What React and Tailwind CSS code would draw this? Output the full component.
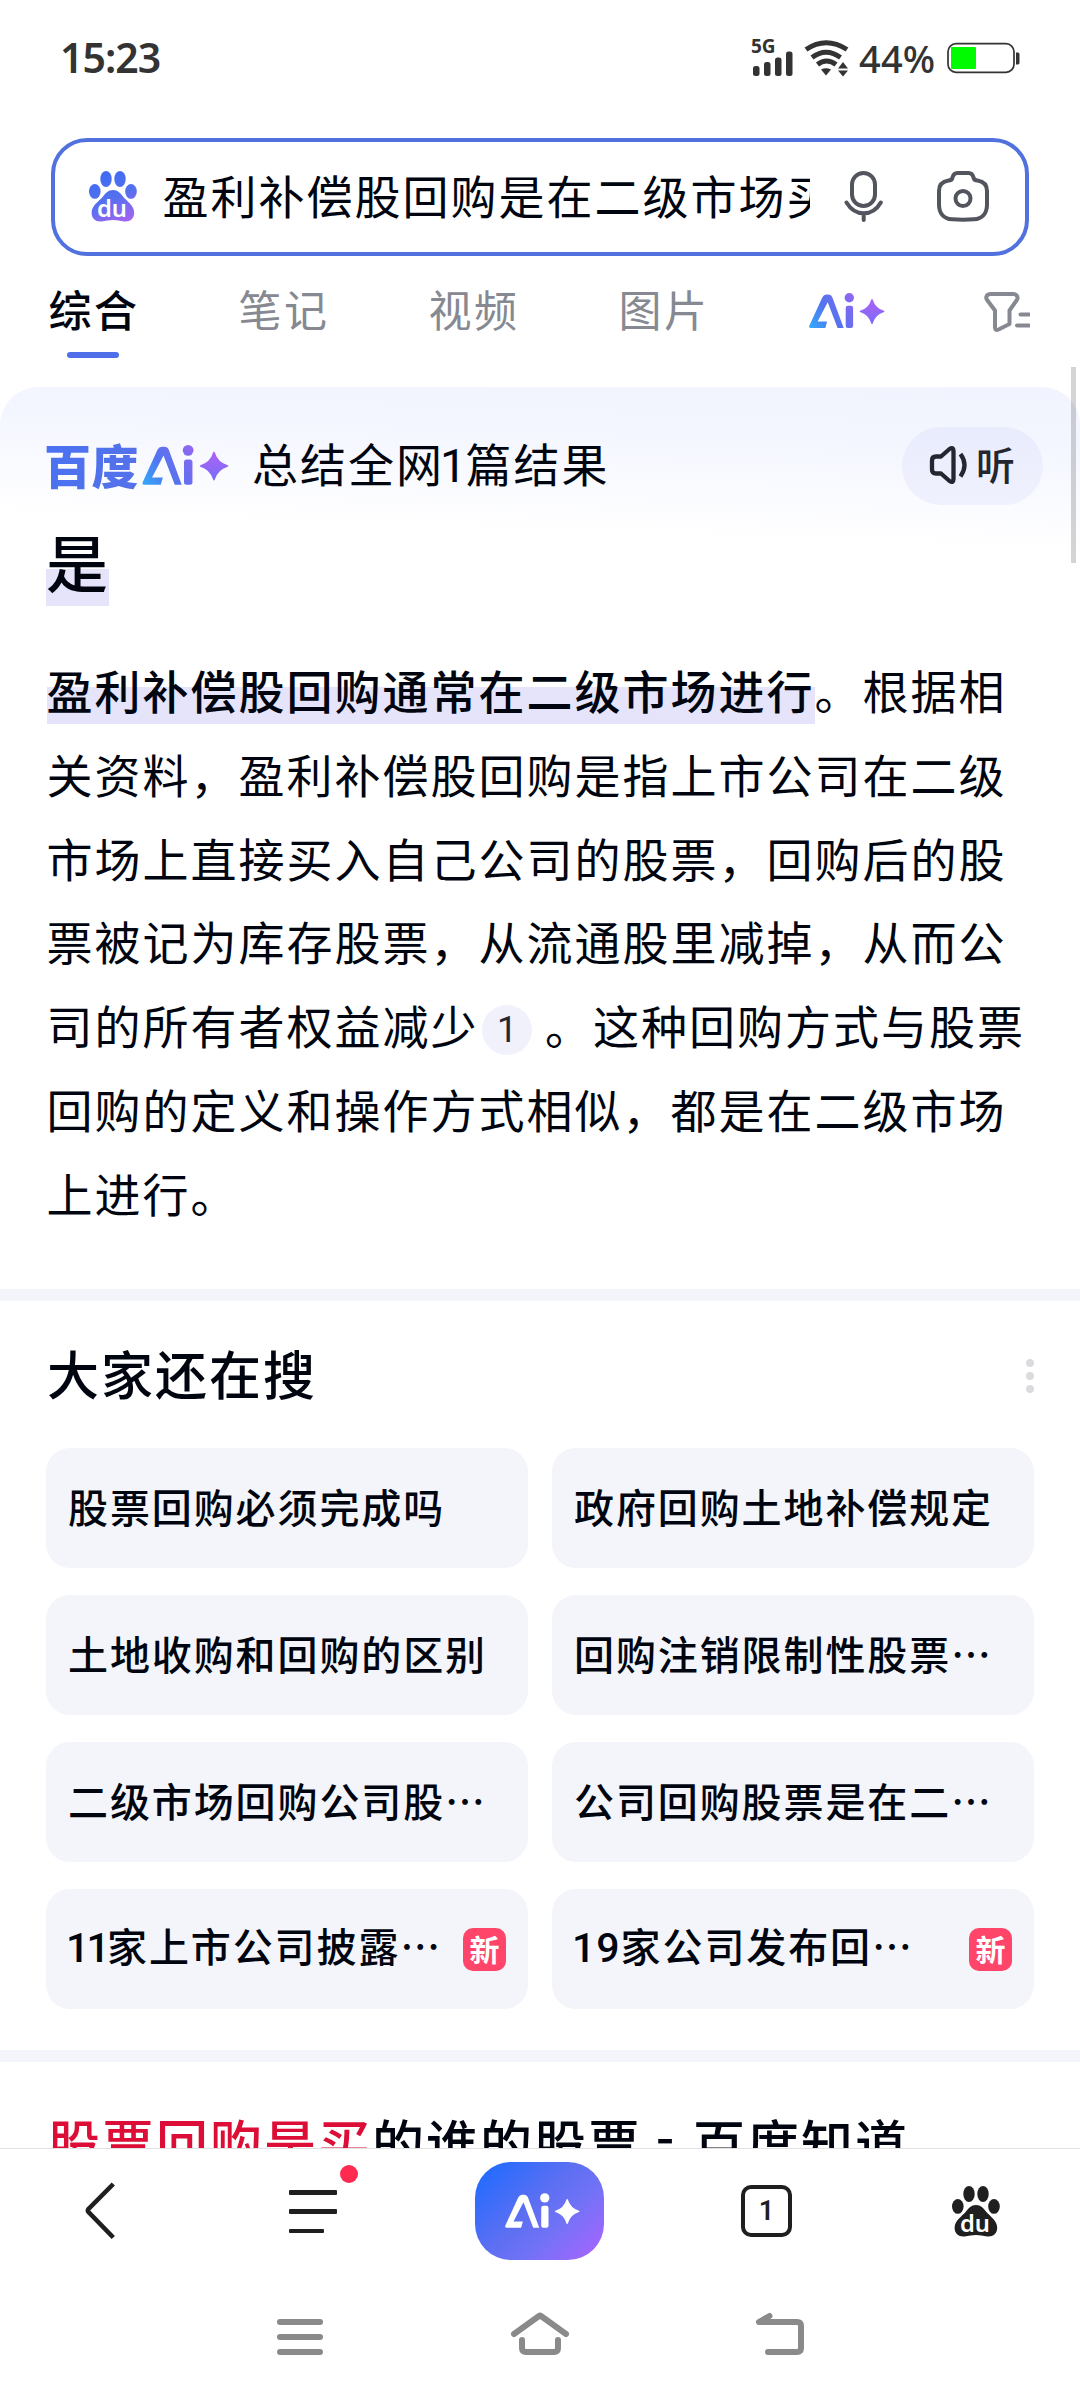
const PAW_TOES = [
  { cx: 17, cy: 8, rx: 5.7, ry: 8 },
  { cx: 31, cy: 8, rx: 5.7, ry: 8 },
  { cx: 5.8, cy: 20.4, rx: 5.8, ry: 7.4 },
  { cx: 42, cy: 20.4, rx: 5.8, ry: 7.4 },
];

function Paw({ fill, className }) {
  return (
    <svg viewBox="0 0 48 51" className={className}>
      <defs>
        <linearGradient id="pawFill" gradientUnits="userSpaceOnUse" x1="12" y1="4" x2="34" y2="51">
          <stop offset="0" stopColor="#3f6cf3" />
          <stop offset="0.5" stopColor="#5470ee" />
          <stop offset="1" stopColor="#a064f2" />
        </linearGradient>
      </defs>
      {PAW_TOES.map((t) => (
        <ellipse key={t.cx} {...t} fill={fill} />
      ))}
      <path
        d="M24 19C19 19 16.800 22 14 25.600C10.500 30 2.600 34.500 2.600 41.800C2.600 48 7 51 12.500 50.500C17 50 20 49 24 49C28 49 31 50 35.200 50.500C40.800 51 45.200 48 45.200 41.800C45.200 34.500 37.500 30 34 25.600C31.200 22 29 19 24 19Z"
        fill={fill}
      />
      <text x="8" y="45.800" textLength="30" lengthAdjust="spacingAndGlyphs" fontSize="23.500" fontWeight="600" fontFamily="Noto Sans, sans-serif" fill="#fff">
        du
      </text>
    </svg>
  );
}

function AiMark({ fill, className }) {
  return (
    <svg viewBox="0 0 76 36" className={className}>
      <defs>
        <linearGradient id="aiFill" gradientUnits="userSpaceOnUse" x1="2" y1="34" x2="54" y2="0">
          <stop offset="0" stopColor="#35a6f8" />
          <stop offset="0.35" stopColor="#5274ee" />
          <stop offset="0.7" stopColor="#7b6bf0" />
          <stop offset="1" stopColor="#ac62f5" />
        </linearGradient>
        <linearGradient id="starFill" gradientUnits="userSpaceOnUse" x1="62" y1="6" x2="62" y2="31">
          <stop offset="0" stopColor="#ad62f4" />
          <stop offset="1" stopColor="#7a6cf8" />
        </linearGradient>
      </defs>
      <g fill={fill ?? "url(#aiFill)"}>
        <path d="M0.400 32.600L13.400 4.200Q14.800 1.500 17.300 1.500H19.500Q22.300 1.500 23.300 4.200L34.700 35H28.600L18.700 9.200L8.600 28.600H18.100L16.300 35H2Q-0.500 35 0.400 32.600Z" />
        <rect x="36.700" y="12.800" width="7.400" height="22.200" rx="2.200" />
        <circle cx="40.300" cy="4.700" r="4.700" />
      </g>
      <path
        d="M63 6.600Q65.800 15.800 74.800 18.400Q65.800 21 63 30.400Q60.200 21 51.300 18.400Q60.200 15.800 63 6.600Z"
        fill={fill ?? "url(#starFill)"}
        stroke={fill ?? "url(#starFill)"}
        strokeWidth="1.400"
        strokeLinejoin="round"
      />
    </svg>
  );
}

function StatusBar() {
  return (
    <div className="flex h-[138px] items-start justify-between pr-[59px] pl-[60px] text-[#333] font-['Noto_Sans',sans-serif]">
      <div className="mt-[28px] text-[41px] leading-[58px] font-semibold tracking-[-1px]">15:23</div>
      <div className="flex pt-[40px]">
        <div className="flex w-[42px] flex-col">
          <span className="-mt-px -ml-[2px] h-[14px] text-[19px] leading-[14px] font-bold">5G</span>
          <svg viewBox="0 0 40 25" className="-mt-[2px] h-[25px] w-[40px]" fill="#333">
            <rect x="0" y="15" width="6.500" height="10" rx="2.500" />
            <rect x="11" y="11" width="6.500" height="14" rx="2.500" />
            <rect x="22" y="6.500" width="6.500" height="18.500" rx="2.500" />
            <rect x="33" y="0.500" width="6.500" height="24.500" rx="2.500" />
          </svg>
        </div>
        <svg viewBox="0 0 46 37" className="ml-[9px] h-[37px] w-[46px]" fill="none" stroke="#333" strokeWidth="5">
          <path d="M2 9.500Q22 -4 43 9.500" />
          <path d="M8 17.500Q22 7 36.500 17.500" />
          <path d="M13.500 24.500Q22.500 17.500 32 24.500" />
          <path d="M17 29.500Q22 27 27 29.500L22 35.500Z" fill="#333" stroke="none" />
          <path d="M39 22L44 28.500H34ZM39 36.500L44 30.500H34Z" fill="#333" stroke="none" />
        </svg>
        <span className="mt-[-7px] ml-[9px] w-[88px] text-[38px] leading-[50px] font-medium tracking-[0.200px]">44%</span>
        <svg viewBox="0 0 74 32" className="mt-[2px] h-[32px] w-[74px]">
          <rect x="1" y="1.700" width="66" height="28.600" rx="8" fill="#fff" stroke="#333" strokeWidth="1.700" />
          <rect x="4" y="5" width="25" height="22" rx="1" fill="#00fa00" />
          <path d="M69 10.500H71Q72.500 10.500 72.500 12.500V20.500Q72.500 22.500 71 22.500H69Z" fill="#333" />
        </svg>
      </div>
    </div>
  );
}

function SearchBox() {
  return (
    <div className="mx-[51px] flex h-[118px] items-center rounded-[36px] border-4 border-[#5171de] pb-[2px] pl-[33.500px] text-[#000510]">
      <Paw fill="url(#pawFill)" className="h-[51px] w-[48px] shrink-0" />
      <div className="-mt-[5px] ml-[26px] w-[647px] overflow-hidden text-[46px] leading-[70px] tracking-[2px] whitespace-nowrap">
        盈利补偿股回购是在二级市场买
      </div>
      <svg viewBox="0 0 40 52" className="ml-[34.500px] h-[52px] w-[40px] shrink-0" fill="none" stroke="#53555e" strokeWidth="4" strokeLinecap="round">
        <rect x="8" y="3" width="23" height="33" rx="11.500" />
        <path d="M2.500 32.500C7 40 13 43.300 19.700 43.300S32.500 40 36.800 32.500M19.700 43.500V50" />
      </svg>
      <svg viewBox="0 0 54 52" className="ml-[52px] h-[52px] w-[54px] shrink-0" fill="none" stroke="#53555e" strokeWidth="4">
        <path d="M16.500 7.500C17.200 4.500 18.500 3 21.500 3H32.500C35.500 3 36.800 4.500 37.500 7.500C38 10 39.500 10.500 41.500 10.500C47.500 11.500 51 15 51 21V34.500C51 43 46.500 48.800 38 49.300Q27 50 16 49.300C7.500 48.800 3 43 3 34.500V21C3 15 6.500 11.500 12.500 10.500C14.500 10.500 16 10 16.500 7.500Z" />
        <circle cx="27" cy="28.500" r="7.500" />
      </svg>
    </div>
  );
}

const TABS = ["笔记", "视频", "图片"];

function TabBar() {
  return (
    <div className="flex h-[131px] pt-[20px] pl-[48.500px] text-[43px] leading-[64px] tracking-[2.500px] text-[#868991]">
      <div className="flex w-[190px] flex-col font-medium text-[#000510]">
        综合
        <span className="mt-[12px] ml-[18.500px] h-[6px] w-[52px] rounded-full bg-[#4e6fe9]" />
      </div>
      {TABS.map((t) => (
        <div key={t} className="w-[190px]">
          {t}
        </div>
      ))}
      <AiMark className="mt-[17px] h-[36px] w-[76px]" />
      <svg viewBox="0 0 46 42" className="mt-[15px] ml-[99px] h-[42px] w-[46px]" fill="none" stroke="#868991" strokeWidth="4" strokeLinejoin="round">
        <path d="M7 3H29C33.500 3 34.500 7 32.500 9.500L25.500 19.500V33L14.500 38.500Q11 40 11 36.500V19.500L3.500 9.500C1 6.500 2.500 3 7 3Z" />
        <path d="M36.500 23.500H45M33 34.500H45" strokeLinecap="round" />
      </svg>
    </div>
  );
}

function AnswerCard() {
  return (
    <section className="h-[902px] rounded-t-[38px] bg-[linear-gradient(182deg,#f1f3fe_0px,#f4f6ff_60px,#ffffff_165px)] px-[46px]">
      <div className="flex h-[157px] items-center">
        <span className="-mt-[3px] -ml-[2px] bg-[linear-gradient(100deg,#4a72f3,#5571e8)] bg-clip-text text-[47px] leading-[60px] font-black tracking-[0.500px] text-transparent">百度</span>
        <AiMark className="ml-[3px] h-[41px] w-[87px]" />
        <span className="-mt-[3px] ml-[23px] text-[46px] leading-[60px] tracking-[2px] text-[#000510]">
          总结全网<span className="-mr-[3px] -ml-[4px] text-[47px] font-['Roboto',sans-serif]">1</span>篇结果
        </span>
        <button className="mr-[-9px] ml-auto flex h-[78px] w-[141px] items-center rounded-full bg-linear-to-b from-[#e9ecfd] to-[#f0f1fe] pb-[2px] pl-[27px] text-[39px] leading-[60px] font-medium text-[#24272f]">
          <svg viewBox="0 0 40 40" className="mr-[7px] h-[40px] w-[40px]" fill="none" stroke="#24272f" strokeWidth="4.300" strokeLinejoin="round">
            <path d="M7 11.500H12L20.500 4Q24.500 1.500 24.500 6V34Q24.500 38.500 20.500 36L12 28.500H7Q3 28.500 3 24.500V15.500Q3 11.500 7 11.500Z" />
            <path d="M31.500 9Q39.500 20 31.500 31.500" />
          </svg>
          <span className="-mt-[3px]">听</span>
        </button>
      </div>
      <h2 className="-mt-[30px] text-[62px] leading-[94px] font-medium tracking-[1px] text-[#000510]">
        <span className="bg-[linear-gradient(transparent_59%,#e5e4fa_59%)]">是</span>
      </h2>
      <p className="mt-[40px] w-[990px] pl-[0.500px] text-[46px] leading-[83.800px] tracking-[2px] text-[#000510]">
        <b className="bg-[linear-gradient(transparent_46%,#e5e4fa_46%)] pb-[2px] font-medium">盈利补偿股回购通常在二级市场进行</b>
        。根据相关资料，盈利补偿股回购是指上市公司在二级市场上直接买入自己公司的股票，回购后的股票被记为库存股票，从流通股里减掉，从而公司的所有者权益减少
        <span className="relative -top-[10px] mr-[13px] ml-[3.500px] inline-flex h-[50px] w-[50px] items-center justify-center rounded-full bg-[#f1f1fb] align-[-8px] text-[36px] leading-none tracking-normal text-[#24272f] font-['Roboto',sans-serif]">1</span>
        。这种回购方式与股票回购的定义和操作方式相似，都是在二级市场上进行。
      </p>
    </section>
  );
}

const RELATED = [
  { text: "股票回购必须完成吗" },
  { text: "政府回购土地补偿规定" },
  { text: "土地收购和回购的区别" },
  { text: "回购注销限制性股票…" },
  { text: "二级市场回购公司股…" },
  { text: "公司回购股票是在二…" },
  { num: "11", text: "家上市公司披露…", fresh: true },
  { num: "19", text: "家公司发布回…", fresh: true },
];

function RelatedSearches() {
  return (
    <section className="h-[749px] px-[46px] pt-[33px] text-[#000510]">
      <div className="flex h-[78px] items-center justify-between">
        <h3 className="pl-px text-[52px] leading-[78px] font-medium tracking-[2px]">大家还在搜</h3>
        <div className="mt-[6px] flex flex-col gap-[5px]">
          <i className="size-[8px] rounded-full bg-[#dadbdf]" />
          <i className="size-[8px] rounded-full bg-[#dadbdf]" />
          <i className="size-[8px] rounded-full bg-[#dadbdf]" />
        </div>
      </div>
      <div className="mt-[36px] grid grid-cols-2 gap-x-[24px] gap-y-[27px]">
        {RELATED.map((r) => (
          <div key={r.text} className="flex h-[120px] items-center justify-between rounded-[24px] bg-[#f4f5fa] px-[22px] text-[40px] leading-[60px] font-medium tracking-[1.900px]">
            <span className="-mt-[5px] whitespace-nowrap">
              {r.num && (
                <span className={r.num === "11" ? "-ml-[2px] text-[41px] tracking-[-2.800px] font-['Roboto',sans-serif]" : "-ml-[2px] text-[41px] tracking-[1px] font-['Roboto',sans-serif]"}>{r.num}</span>
              )}
              {r.text}
            </span>
            {r.fresh && (
              <span className="flex size-[43px] items-center justify-center rounded-[10px] bg-[#ff4569] pb-[2px] text-[30px] leading-none font-bold tracking-normal text-white">新</span>
            )}
          </div>
        ))}
      </div>
    </section>
  );
}

function BottomBar() {
  return (
    <nav className="flex h-[127px] border-t border-[#e2e2e4] bg-white">
      <svg viewBox="0 0 32 60" className="mt-[32px] ml-[84px] h-[60px] w-[32px]" fill="none" stroke="#1f1f1f" strokeWidth="4.600">
        <path d="M29.300 3L4.500 28Q3.300 29.500 4.500 31L29.300 56.500" />
      </svg>
      <div className="relative mt-[41px] ml-[173px] flex h-[43px] w-[48px] flex-col justify-between">
        <i className="h-[4.500px] w-[47.500px] rounded-[1px] bg-[#1f1f1f]" />
        <i className="h-[4.500px] w-[47.500px] rounded-[1px] bg-[#1f1f1f]" />
        <i className="h-[4.500px] w-[34.500px] rounded-[1px] bg-[#1f1f1f]" />
        <span className="absolute top-[-25px] right-[-21px] size-[18px] rounded-full bg-[#ff2a4f]" />
      </div>
      <div className="mt-[13px] ml-[138px] flex h-[98px] w-[129px] items-center justify-center rounded-[36px] bg-[linear-gradient(135deg,#1f6bff_5%,#5d6ff2_45%,#7272f6_65%,#a565ff_95%)] pl-[5px]">
        <AiMark fill="#fff" className="h-[36px] w-[75px]" />
      </div>
      <div className="mt-[36px] ml-[137px] flex h-[52px] w-[51px] items-center justify-center rounded-[10px] border-[4.500px] border-[#1f1f1f] text-[27px] leading-none font-semibold text-[#1f1f1f] font-['Roboto',sans-serif]">1</div>
      <Paw fill="#1f1f1f" className="mt-[37px] ml-[160px] h-[51px] w-[48px]" />
    </nav>
  );
}

function SystemNav() {
  return (
    <div className="flex h-[125px] bg-white">
      <div className="mt-[44px] ml-[277px] flex h-[36px] w-[46px] flex-col justify-between">
        <i className="h-[6px] rounded-full bg-[#8a8a8a]" />
        <i className="h-[6px] rounded-full bg-[#8a8a8a]" />
        <i className="h-[6px] rounded-full bg-[#8a8a8a]" />
      </div>
      <svg viewBox="0 0 58 44" className="mt-[37px] ml-[188px] h-[44px] w-[58px]" fill="none" stroke="#8a8a8a" strokeWidth="6" strokeLinecap="round" strokeLinejoin="round">
        <path d="M3 22L28 4Q29 3.200 30 4L55 22" />
        <path d="M11 28V36Q11 40 15 40H43Q47 40 47 36V28" />
      </svg>
      <svg viewBox="0 0 50 44" className="mt-[37px] ml-[186px] h-[44px] w-[50px]" fill="none" stroke="#8a8a8a" strokeWidth="6" strokeLinecap="round" strokeLinejoin="round">
        <path d="M14.500 4L4 10H42Q46 10 46 14V36Q46 40 42 40H13" />
      </svg>
    </div>
  );
}

export default function App() {
  return (
    <div className="relative flex h-[2400px] w-[1080px] flex-col overflow-hidden bg-white font-['Noto_Sans_CJK_SC',sans-serif]">
      <StatusBar />
      <SearchBox />
      <TabBar />
      <AnswerCard />
      <div className="h-[12px] shrink-0 bg-[#f4f5fa]" />
      <RelatedSearches />
      <div className="h-[12px] shrink-0 bg-[#f4f5fa]" />
      <div className="h-[86px] shrink-0 overflow-hidden pt-[41px] pl-[48px] text-[52px] leading-[78px] font-medium tracking-[2px] whitespace-nowrap text-[#000510]">
        <em className="text-[#dc0d36] not-italic">股票回购是买</em>的谁的股票 <span className="relative -top-[8px] mr-[3px]">-</span> 百度知道
      </div>
      <BottomBar />
      <SystemNav />
      <div className="absolute top-[367px] right-[4px] h-[196px] w-[5px] bg-black/17" />
    </div>
  );
}
